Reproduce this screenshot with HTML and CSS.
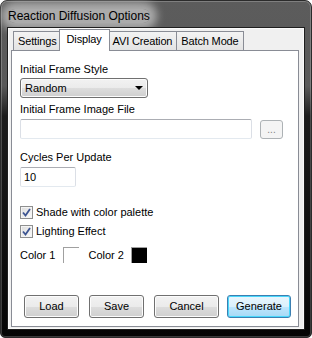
FILE: index.html
```html
<!DOCTYPE html>
<html lang="en">
<head>
  <meta charset="UTF-8">
  <title>Reaction Diffusion Options</title>
  <link rel="stylesheet" href="styles.css">
</head>
<body>
  <div class="window">

    <!-- Title bar -->
    <div class="titlebar">
      <span class="title">Reaction Diffusion Options</span>
    </div>

    <div class="client">

      <!-- Tabs -->
      <div class="tabs">
        <div class="tab">Settings</div>
        <div class="tab active">Display</div>
        <div class="tab">AVI Creation</div>
        <div class="tab">Batch Mode</div>
      </div>

      <!-- Display page -->
      <div class="panel">
        <div class="field-label">Initial Frame Style</div>
        <div class="combo">
          <span>Random</span>
          <span class="arrow"></span>
        </div>

        <div class="field-label second">Initial Frame Image File</div>
        <div class="file-row">
          <div class="textbox wide"></div>
          <div class="browse-btn">...</div>
        </div>

        <div class="field-label third">Cycles Per Update</div>
        <div class="textbox short">10</div>

        <label class="check first">
          <span class="box">
            <svg width="9" height="9" viewBox="0 0 9 9"><path d="M1 4.5 L3.5 7.5 L8 1" fill="none" stroke="#3d5592" stroke-width="1.8"/></svg>
          </span>
          Shade with color palette
        </label>
        <label class="check">
          <span class="box">
            <svg width="9" height="9" viewBox="0 0 9 9"><path d="M1 4.5 L3.5 7.5 L8 1" fill="none" stroke="#3d5592" stroke-width="1.8"/></svg>
          </span>
          Lighting Effect
        </label>

        <div class="colors">
          <span>Color 1</span>
          <span class="swatch white"></span>
          <span class="color2">Color 2</span>
          <span class="swatch black"></span>
        </div>

        <div class="buttons">
          <div class="btn load">Load</div>
          <div class="btn save">Save</div>
          <div class="btn cancel">Cancel</div>
          <div class="btn generate">Generate</div>
        </div>
      </div>

    </div>
  </div>
</body>
</html>
```

FILE: styles.css
```css
body {
  margin: 0;
  font-family: "Liberation Sans", Arial, sans-serif;
  font-size: 11px;
  color: #000;
  background: #fff;
}

.window {
  width: 312px;
  height: 338px;
  box-sizing: border-box;
  padding: 0 8px 8px;
  border-radius: 7px 7px 5px 5px;
  border: 1px solid #2b2b2b;
  background: linear-gradient(#5c5c5c 0, #595959 85px, #1c1c1c 115px, #050505 100%);
  box-shadow: inset 0 0 0 1px rgba(255, 255, 255, 0.22);
  display: flex;
  flex-direction: column;
}

.titlebar {
  height: 27px;
  display: flex;
  align-items: center;
  margin-left: -1px;
}

.title {
  font-size: 12px;
  color: #000;
  background: rgba(205, 205, 205, 0.7);
  border-radius: 12px;
  box-shadow: 0 0 9px 7px rgba(205, 205, 205, 0.7);
  line-height: 14px;
  margin-top: 2px;
}

.client {
  flex: 1;
  background: #f0f0f0;
  padding: 1px 3px 0 3px;
  box-shadow: 0 0 0 1px #1e1e1e, inset 0 0 0 1px #fafafa;
  margin-right: -1px;
  margin-left: -1px;
}

/* Tabs */
.tabs {
  display: flex;
  align-items: flex-end;
  height: 21px;
  padding-left: 2px;
  position: relative;
  z-index: 1;
  letter-spacing: -0.15px;
}

.tab {
  height: 18px;
  line-height: 18px;
  padding: 0 4px;
  border: 1px solid #898c95;
  border-bottom: none;
  background: linear-gradient(#f3f3f3, #e3e3e3);
  margin-right: -1px;
}

.tab.active {
  height: 21px;
  line-height: 18px;
  background: #fff;
  margin: 0 -1px 0 -2px;
  padding: 0 7px;
  position: relative;
  z-index: 2;
  margin-bottom: -1px;
}

.tab.active + .tab {
  margin-left: -1px;
}

.panel {
  height: 277px;
  box-sizing: border-box;
  margin-right: 2px;
  border: 1px solid #898c95;
  background: #fff;
  padding: 11px 0 8px 8px;
  display: flex;
  flex-direction: column;
  align-items: flex-start;
}

.field-label {
  line-height: 14px;
  height: 14px;
}

.field-label.second {
  margin-top: 4px;
}

.field-label.third {
  margin-top: 11px;
}

.combo {
  margin-top: 2px;
  width: 128px;
  height: 20px;
  box-sizing: border-box;
  border: 1px solid #707070;
  border-radius: 3px;
  background: linear-gradient(#f2f2f2 0, #ebebeb 50%, #dddddd 50%, #cfcfcf 100%);
  box-shadow: inset 0 0 0 1px #fcfcfc;
  display: flex;
  align-items: center;
  justify-content: space-between;
  padding: 0 3px 0 4px;
}

.arrow {
  width: 0;
  height: 0;
  border-left: 4px solid transparent;
  border-right: 4px solid transparent;
  border-top: 4px solid #000;
  margin-right: 1px;
}

.file-row {
  margin-top: 3px;
  display: flex;
  align-items: flex-start;
  gap: 8px;
}

.textbox {
  height: 20px;
  box-sizing: border-box;
  border: 1px solid #abadb3;
  border-left-color: #dbdfe6;
  border-right-color: #dbdfe6;
  border-bottom-color: #e3e9ef;
  border-radius: 2px;
  background: #fff;
  line-height: 18px;
  padding-left: 3px;
}

.textbox.wide {
  width: 232px;
}

.textbox.short {
  margin-top: 3px;
  width: 56px;
}

.browse-btn {
  margin-top: 1px;
  width: 23px;
  height: 19px;
  box-sizing: border-box;
  border: 1px solid #adb2b5;
  border-radius: 3px;
  background: #f4f4f4;
  color: #838383;
  text-align: center;
  line-height: 17px;
  font-size: 10px;
}

.check {
  display: flex;
  align-items: center;
  gap: 3px;
  height: 13px;
  line-height: 13px;
  margin-top: 6px;
}

.check.first {
  margin-top: 19px;
}

.box {
  width: 13px;
  height: 13px;
  box-sizing: border-box;
  border: 1px solid #8e8f8f;
  background: linear-gradient(135deg, #dcdcdc, #fbfbfb);
  box-shadow: inset 0 0 0 1px #f4f4f4;
  display: flex;
  align-items: center;
  justify-content: center;
}

.colors {
  margin-top: 9px;
  display: flex;
  align-items: center;
  height: 16px;
}

.swatch {
  width: 16px;
  height: 16px;
  box-sizing: border-box;
  margin-left: 8px;
}

.swatch.white {
  background: #fff;
  border-top: 1px solid #a0a0a0;
  border-left: 1px solid #a0a0a0;
}

.swatch.black {
  background: #000;
  border-top: 1px solid #a0a0a0;
  border-left: 1px solid #a0a0a0;
  margin-left: 7px;
}

.color2 {
  margin-left: 9px;
}

/* Buttons */
.buttons {
  margin-top: auto;
  margin-left: 4px;
  display: flex;
  gap: 10px;
}

.btn {
  height: 23px;
  box-sizing: border-box;
  border: 1px solid #707070;
  border-radius: 3px;
  background: linear-gradient(#f2f2f2 0, #ebebeb 50%, #dddddd 50%, #cfcfcf 100%);
  box-shadow: inset 0 0 0 1px #fcfcfc;
  text-align: center;
  line-height: 21px;
}

.btn.load,
.btn.save {
  width: 55px;
}

.btn.cancel {
  width: 65px;
}

.btn.generate {
  width: 64px;
  margin-left: -2px;
  border-color: #3c7fb1;
  background: linear-gradient(#eaf6fd 0, #d9f0fc 50%, #bee6fd 50%, #a7d9f5 100%);
  box-shadow: inset 0 0 0 1px #48d7fb;
}
```
